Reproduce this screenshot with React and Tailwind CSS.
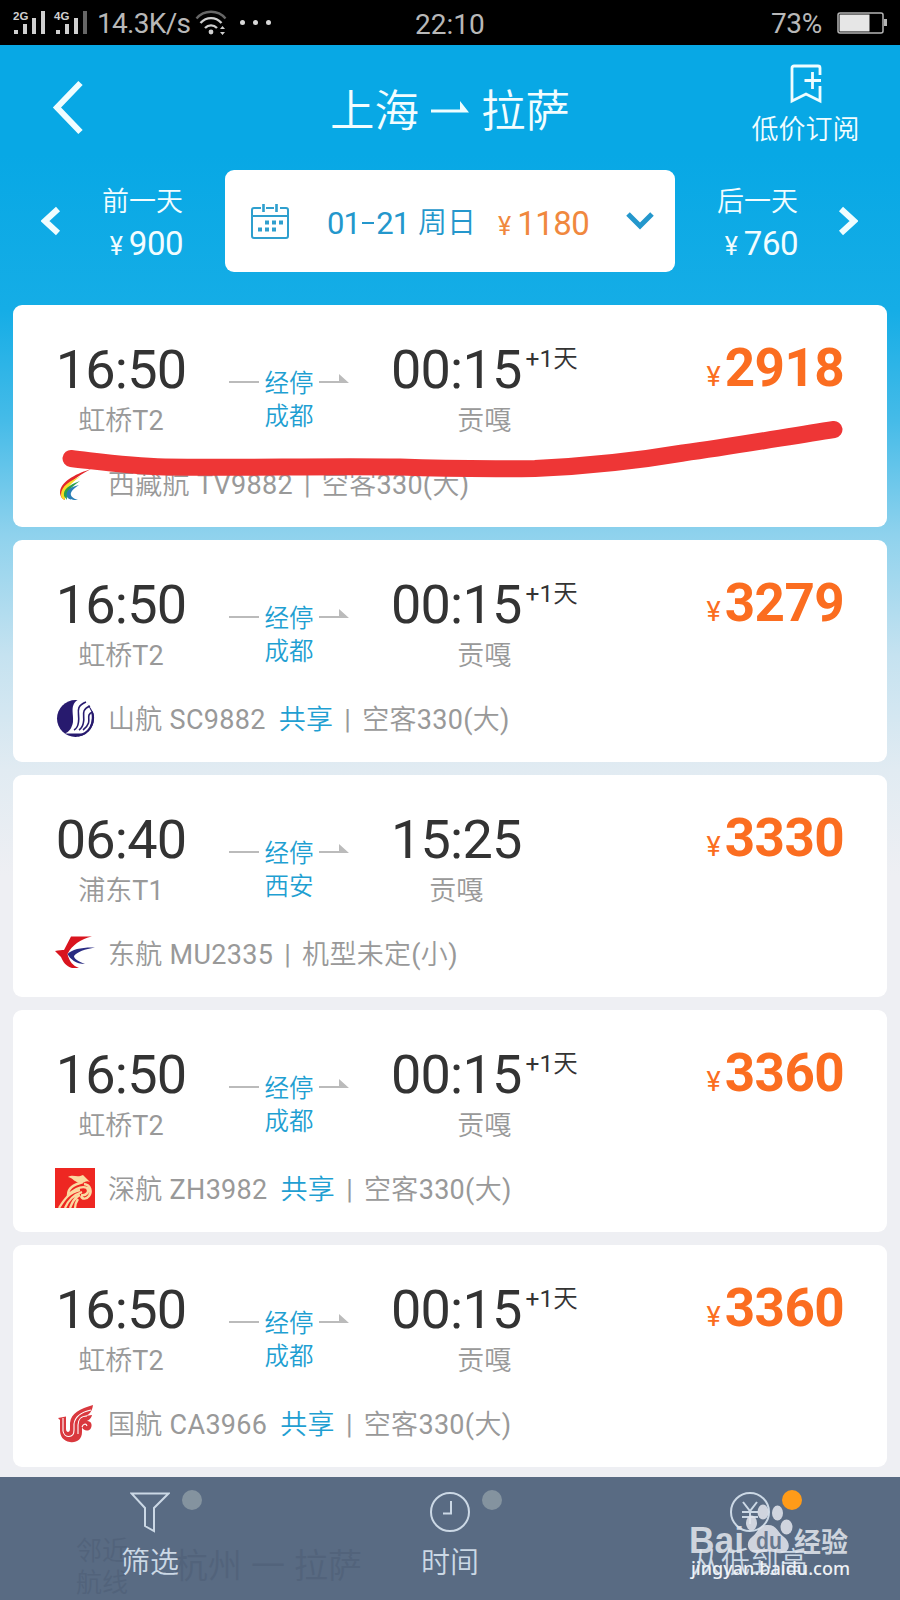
const flights = [
  { depart: "16:50", from: "虹桥T2", stop: "成都", arrive: "00:15", nextDay: true, price: "2918", airline: "西藏航 TV9882", shared: false, plane: "空客330(大)", Logo: TibetLogo },
  { depart: "16:50", from: "虹桥T2", stop: "成都", arrive: "00:15", nextDay: true, price: "3279", airline: "山航 SC9882", shared: true, plane: "空客330(大)", Logo: ShandongLogo },
  { depart: "06:40", from: "浦东T1", stop: "西安", arrive: "15:25", nextDay: false, price: "3330", airline: "东航 MU2335", shared: false, plane: "机型未定(小)", Logo: EasternLogo },
  { depart: "16:50", from: "虹桥T2", stop: "成都", arrive: "00:15", nextDay: true, price: "3360", airline: "深航 ZH3982", shared: true, plane: "空客330(大)", Logo: ShenzhenLogo },
  { depart: "16:50", from: "虹桥T2", stop: "成都", arrive: "00:15", nextDay: true, price: "3360", airline: "国航 CA3966", shared: true, plane: "空客330(大)", Logo: AirChinaLogo },
];

export default function App() {
  return (
    <div className="relative flex h-[1600px] w-[900px] flex-col overflow-hidden bg-[#eeeff3] font-['Roboto','Noto_Sans_CJK_SC_DemiLight','Noto_Sans_CJK_SC',sans-serif] font-normal">
      <StatusBar />
      <div className="flex flex-1 flex-col bg-[linear-gradient(180deg,#08a8e5_0px,#08a8e5_110px,#15ade6_265px,#45bbe8_375px,#8fd2ed_490px,#c5e2f0_610px,#e1ebf2_725px,#eeeff3_830px)]">
        <Header />
        <DateBar />
        <div className="mt-[33px] flex flex-col gap-[13px] px-[13px]">
          {flights.map((flight, i) => (
            <FlightCard key={i} flight={flight} marked={i === 0} />
          ))}
        </div>
      </div>
      <BottomBar />
    </div>
  );
}

function StatusBar() {
  return (
    <div className="flex h-[45px] shrink-0 items-center bg-black pr-[13px] pl-[13px] text-[28px] leading-[45px] text-[#b8b8b8]">
      <svg width="76" height="26" viewBox="0 0 76 26" className="shrink-0">
        <g fill="#d0d0d0">
          <text x="0" y="10" fontSize="11.500" fontWeight="700" fontFamily="Liberation Sans">2G</text>
          <rect x="1" y="20" width="4" height="4" />
          <rect x="10" y="14" width="4" height="10" />
          <rect x="19" y="8" width="4" height="16" />
          <rect x="28" y="1" width="4" height="23" />
          <text x="41" y="10" fontSize="11.500" fontWeight="700" fontFamily="Liberation Sans">4G</text>
          <rect x="43" y="20" width="4" height="4" />
          <rect x="52" y="14" width="4" height="10" />
          <rect x="61" y="8" width="4" height="16" />
          <rect x="70" y="1" width="4" height="23" fill="#666" />
        </g>
      </svg>
      <span className="mt-[2px] ml-[8px] w-[98px] tracking-[-0.7px] whitespace-nowrap">14.3K/s</span>
      <svg width="32" height="26" viewBox="0 0 32 26" fill="none" strokeWidth="2.4" className="shrink-0">
        <path d="M1.5 8.5C9 -0.5 23 -0.5 30.500 8.500" stroke="#666" />
        <path d="M5.500 13C11.500 6.500 20.500 6.500 26.500 13" stroke="#d0d0d0" />
        <path d="M10 18C13.500 14.500 18.500 14.500 22 18" stroke="#d0d0d0" />
        <circle cx="16" cy="22" r="2.400" fill="#d0d0d0" />
        <path d="M27.500 16l2.500 3h-5zM27.500 25l2.500 -3h-5z" fill="#d0d0d0" />
      </svg>
      <div className="ml-[13px] flex gap-2">
        <i className="size-[5px] rounded-full bg-[#d8d8d8]" />
        <i className="size-[5px] rounded-full bg-[#d8d8d8]" />
        <i className="size-[5px] rounded-full bg-[#d8d8d8]" />
      </div>
      <span className="mt-[4px] ml-[144px] w-[72px] whitespace-nowrap">22:10</span>
      <span className="mt-[2px] ml-auto tracking-[-0.3px]">73%</span>
      <svg width="50" height="22" viewBox="0 0 50 22" className="ml-[15px]">
        <rect x="1" y="1" width="45" height="20" rx="2" fill="none" stroke="#b5b5b5" strokeWidth="1.500" />
        <rect x="2.500" y="2.500" width="30" height="17" fill="#e6e6e6" />
        <rect x="47" y="7" width="3" height="7" fill="#b5b5b5" />
      </svg>
    </div>
  );
}

function Header() {
  return (
    <div className="grid h-[125px] shrink-0 grid-cols-3 text-[#f2fdff]">
      <svg width="32" height="56" viewBox="0 0 32 56" className="mt-[34px] ml-[52px]" fill="none" stroke="#effdff" strokeWidth="6">
        <path d="M28.500 4L5 28.500L28.500 53" />
      </svg>
      <h1 className="flex items-center justify-center pt-[8px] text-[44.500px] leading-[60px]">
        <span>上海</span>
        <svg width="38" height="12" viewBox="0 0 38 12" className="mx-[12px] mt-[-9px]" fill="#effdff">
          <path d="M0 8.500h29V0l9 11.500H0z" />
        </svg>
        <span>拉萨</span>
      </h1>
      <div className="flex flex-col items-center pt-[19px] pl-[111px]">
        <svg width="32" height="40" viewBox="0 0 32 40" fill="none" stroke="#effdff" strokeWidth="2.800">
          <path d="M30 11V4a2 2 0 0 0-2-2H4a2 2 0 0 0-2 2v33l14-7 14 7V22M14.500 16.500H31M22.500 8v17" />
        </svg>
        <span className="mt-[7px] text-[27px] leading-[38px]">低价订阅</span>
      </div>
    </div>
  );
}

function DateBar() {
  return (
    <div className="flex h-[102px] shrink-0 items-center text-[#f2fdff]">
      <svg width="20" height="30" viewBox="0 0 20 30" className="ml-[41px]" fill="none" stroke="#effdff" strokeWidth="6">
        <path d="M17 3L4 15L17 27" />
      </svg>
      <div className="ml-[40px] flex w-[82px] flex-col items-end pt-[6px] text-[27px] leading-[41px]">
        <span>前一天</span>
        <Price className="gap-[6px] text-[33px] leading-[41px]" yen="text-[25px]" value="900" />
      </div>
      <div className="ml-[42px] flex h-[102px] w-[450px] items-center rounded-[9px] bg-white text-[#2497cc]">
        <svg width="38" height="35" viewBox="0 0 38 35" className="ml-[26px]" fill="none" stroke="#2f9fce" strokeWidth="2">
          <path d="M10 4H3a2 2 0 0 0-2 2v26a2 2 0 0 0 2 2h32a2 2 0 0 0 2-2V6a2 2 0 0 0-2-2h-6M15 4h8M1 12h36" />
          <path d="M12.500 0v8M25.500 0v8" strokeWidth="2.600" />
          <path d="M14 18.500h19M7 25.500h19" strokeWidth="4" strokeDasharray="4 3" />
        </svg>
        <span className="mt-[6px] ml-[38px] w-[91px] text-[31px] tracking-[-0.8px] whitespace-nowrap">01<span className="mx-[2px] inline-block h-[2px] w-[12px] -translate-y-[10px] bg-[#2497cc]" />21</span>
        <span className="mt-[6px] text-[29px]">周日</span>
        <Price className="mt-[6px] ml-[22px] gap-[6px] text-[33px] text-[#f0883e]" yen="text-[25px]" value="1180" />
        <svg width="28" height="18" viewBox="0 0 28 18" className="mr-[21px] ml-auto" fill="none" stroke="#2497cc" strokeWidth="5">
          <path d="M2 2L14 14L26 2" />
        </svg>
      </div>
      <div className="ml-[41px] flex w-[82px] flex-col items-end pt-[6px] text-[27px] leading-[41px]">
        <span>后一天</span>
        <Price className="gap-[6px] text-[33px] leading-[41px]" yen="text-[25px]" value="760" />
      </div>
      <svg width="20" height="30" viewBox="0 0 20 30" className="ml-[40px]" fill="none" stroke="#effdff" strokeWidth="6">
        <path d="M3 3L16 15L3 27" />
      </svg>
    </div>
  );
}

function Price({ value, className, yen }) {
  return (
    <span className={"flex items-baseline " + className}>
      <span className={yen}>¥</span>
      <span className="tracking-[-0.5px]">{value}</span>
    </span>
  );
}

function FlightCard({ flight, marked }) {
  const { depart, from, stop, arrive, nextDay, price, airline, shared, plane, Logo } = flight;
  return (
    <div className="relative flex h-[222px] shrink-0 flex-col rounded-[9px] bg-white pl-[42px]">
      <div className="flex h-[133px] pt-[38px]">
        <div className="flex w-[132px] flex-col items-center">
          <span className="text-[54px] leading-[54px] tracking-[-0.8px] text-[#333]">{depart}</span>
          <span className="mt-[7px] text-[27px] leading-[34px] text-[#999]">{from}</span>
        </div>
        <div className="ml-[42px] flex w-[120px] flex-col items-center pt-[24px] text-[24.500px] leading-[33px] text-[#1f9fd2]">
          <div className="flex items-center whitespace-nowrap">
            <span className="mt-[-4px] h-[2px] w-[30px] bg-[#bbb]" />
            <span className="mx-[5.500px]">经停</span>
            <svg width="30" height="9" viewBox="0 0 30 9" className="mt-[-10px]" fill="#bbb">
              <path d="M0 7h20V0l10 9H0z" />
            </svg>
          </div>
          <span>{stop}</span>
        </div>
        <div className="ml-[42px] flex flex-col items-center">
          <div className="flex">
            <span className="text-[54px] leading-[54px] tracking-[-0.8px] text-[#333]">{arrive}</span>
            {nextDay && <span className="mt-[1px] ml-[4px] text-[24.500px] leading-[30px] text-[#333]">+1天</span>}
          </div>
          <span className="mt-[7px] text-[27px] leading-[34px] text-[#999]">贡嘎</span>
        </div>
        <div className="mr-[43px] ml-auto flex items-baseline text-[#fb6d20]">
          <span className="mr-[4px] text-[27px]">¥</span>
          <span className="text-[53px] leading-[50px] font-bold tracking-[-0.6px]">{price}</span>
        </div>
      </div>
      <div className="mt-[26px] flex h-[40px] items-center text-[27px] leading-[40px] tracking-[0.3px] whitespace-pre text-[#999]">
        <Logo />
        <span className="mt-[2px] ml-[13px]">{airline}</span>
        {shared && <span className="mt-[2px] ml-[13px] text-[#1f9fd2]">共享</span>}
        <span className="mx-[11px] mt-[2px]">|</span>
        <span className="mt-[2px]">{plane}</span>
      </div>
      {marked && (
        <svg width="874" height="222" viewBox="13 305 874 222" className="absolute inset-0" fill="none">
          <path d="M71 458.500C110 463 130 466 165 467C245 468 320 466 400 467C450 469 490 469 535 468.500C590 466 630 462 683 453C735 446 785 437 834 429.500" stroke="#ee3636" strokeWidth="17" strokeLinecap="round" />
        </svg>
      )}
    </div>
  );
}

function TibetLogo() {
  return (
    <svg width="40" height="40" viewBox="0 0 40 40" fill="none" className="shrink-0">
      <path d="M36 5C24 9 6 16 5 28C5 32 7 35 10 36C8 24 18 14 36 5Z" fill="#e3262b" />
      <path d="M26 12C15 17 6 22 6 31C6 34 8 35 10 36C9 27 15 19 26 12Z" fill="#f8dd27" />
      <path d="M25 17C14 21 8 25 9 32L12 36C11 28 16 23 25 17Z" fill="#2ca04b" />
      <path d="M24 21C14 23 10 28 12 33C14 36 18 36 23 36C11 32 16 26 24 21Z" fill="#287eb5" />
    </svg>
  );
}

function ShandongLogo() {
  return (
    <svg width="40" height="40" viewBox="0 0 40 40" fill="none" className="shrink-0">
      <circle cx="20.500" cy="19.500" r="18.500" fill="#271a6e" />
      <path d="M24 0C14 6 19 14 18 23C17 29 14 33 10 34.500H30C36 30 37.500 22 36.500 13L32 4Z" fill="#fff" />
      <path d="M31 3C19 8 25 14 23.500 23C23 27 21 30 19 31M35 7C25 11 30 17 28.500 23C28 27 27 29 24 31M38 13C31 15 35 20 33.500 24C32.500 27 31 29 28 31" stroke="#271a6e" strokeWidth="1.600" />
      <path d="M37.500 14C40 24 34 35 23 36.500" stroke="#271a6e" strokeWidth="2" />
    </svg>
  );
}

function EasternLogo() {
  return (
    <svg width="40" height="40" viewBox="0 0 40 40" className="shrink-0">
      <path d="M0 17C4 16 7 16 9 16L16 2.500H37C26 5 17 11 12.500 20C14 27 18 32 24 34H17C11 32 8 28 6 23Z" fill="#d9141e" />
      <path d="M40 13.500C28 13 17 15 12.500 20C15 25 21 30 30 30C23 27 19 25 19 22C22 18 30 15 40 13.500Z" fill="#2a2c82" />
    </svg>
  );
}

function ShenzhenLogo() {
  return (
    <svg width="40" height="40" viewBox="0 0 40 40" fill="none" className="mt-[-3px] shrink-0">
      <rect width="40" height="40" fill="#ee2722" />
      <path d="M13 9C18 6 22 10 28 7L35 14C31 12 30 15 26 15C20 15 18 10 13 9Z" fill="#fbd9a0" />
      <path d="M28 14C18 17 13 20 13 27C21 20 28 18 32 20C35 24 31 28 26 27M29 16C36 17 37 24 34 28C31 32 27 31 26 28" stroke="#fbd9a0" strokeWidth="2.400" />
      <path d="M25 22C14 24 9 32 4 40M27 24C18 27 13 33 10 40M25 27C19 30 17 35 15 40M23 31C21 34 20 37 20 40" stroke="#fbd9a0" strokeWidth="2.300" />
    </svg>
  );
}

function AirChinaLogo() {
  return (
    <svg width="40" height="40" viewBox="0 0 40 40" fill="none" className="shrink-0">
      <path d="M3 14L11 12.500V25C11 29 15 29 15 25V19C16 9 25 5 38 1C37 8 34 11 30 12L37 11C36 15 33 17 29 18C35 15 38 20 36 24C34 28 28 27 27 23V28C27 36 21 39 15 38C8 37 5 32 5 26V16Z" fill="#d9383e" />
      <path d="M8 14V27C9 34 19 35 19 26V20C20 12 27 8 36 6M23 30V21C23 16 26 12 32 12M27 23C28 20 31 19 32 22" stroke="#fff" strokeWidth="1.100" />
    </svg>
  );
}

function BottomBar() {
  return (
    <div className="relative grid h-[123px] shrink-0 grid-cols-3 bg-[#596b83] text-[#cbd8e5]">
      <GhostRow />
      <Tab label="筛选" dot="bg-[#84939f]">
        <path d="M1.500 2.500H38.500L24 17V40L15 35V17Z" />
      </Tab>
      <Tab label="时间" dot="bg-[#84939f]">
        <circle cx="20" cy="21" r="19" />
        <path d="M21 10V22.500H13" />
      </Tab>
      <Tab label="从低到高" dot="bg-[#ff9b18]">
        <circle cx="20" cy="21" r="19" />
        <path d="M13 11L20 20L27 11M20 20V33M12 21H28M12 26H28" />
      </Tab>
      <Watermark />
    </div>
  );
}

function Tab({ label, dot, children }) {
  return (
    <div className="relative flex flex-col items-center pt-[14px]">
      <svg width="40" height="42" viewBox="0 0 40 42" fill="none" stroke="currentColor" strokeWidth="2">
        {children}
      </svg>
      <span className={"absolute top-[13px] left-[182px] size-[20px] rounded-full " + dot} />
      <span className="mt-[10px] text-[29px] leading-[40px]">{label}</span>
    </div>
  );
}

function GhostRow() {
  return (
    <div className="absolute inset-0 text-[#52637b]">
      <div className="absolute top-[58px] left-[76px] text-[26px] leading-[32px]">邻近<br />航线</div>
      <div className="absolute top-[69px] left-[174px] flex gap-[9px] text-[34px] leading-[40px]">
        <span>杭州</span>
        <span>一</span>
        <span>拉萨</span>
      </div>
    </div>
  );
}

function Watermark() {
  return (
    <svg width="170" height="90" viewBox="0 0 170 90" className="absolute top-[22px] left-[686px]" fill="#dfe3ea" fillOpacity="0.880" fontFamily="Liberation Sans, sans-serif">
      <text x="3" y="54" fontSize="36" fontWeight="700" textLength="55" lengthAdjust="spacingAndGlyphs">Bai</text>
      <ellipse cx="65.500" cy="24" rx="5.500" ry="7.500" />
      <ellipse cx="77" cy="13" rx="5.500" ry="7.500" />
      <ellipse cx="91.500" cy="14" rx="5.500" ry="7.500" />
      <ellipse cx="100.500" cy="28" rx="6" ry="7.500" />
      <path d="M82 26C72 26 72 34 66 38C58 44 62 56 74 54C80 52 86 52 92 54C104 56 106 44 98 38C92 34 91 26 82 26Z" />
      <text x="70" y="50" fontSize="23" fontWeight="700" fill="#596b83" textLength="26" lengthAdjust="spacingAndGlyphs">du</text>
      <text x="108" y="53" fontSize="27" fontWeight="700" fontFamily="Noto Sans CJK SC, sans-serif">经验</text>
      <text x="5" y="76" fontSize="18" fontWeight="500" fontFamily="Noto Sans, sans-serif" fill="#eef1f5" fillOpacity="1" textLength="159" lengthAdjust="spacingAndGlyphs">jingyan.baidu.com</text>
    </svg>
  );
}
